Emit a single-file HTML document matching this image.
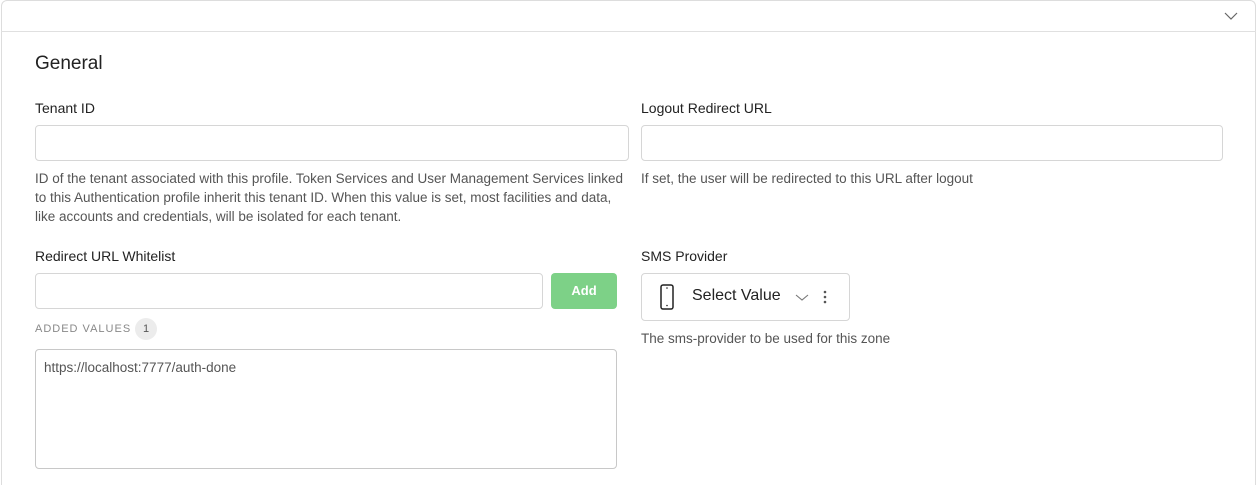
<!DOCTYPE html>
<html><head><style>
*{box-sizing:border-box;margin:0;padding:0}
html,body{width:1258px;height:485px;overflow:hidden}
body{background:#fff;font-family:"Liberation Sans",sans-serif;color:#222;position:relative}
.card{position:absolute;left:1px;top:0;width:1255px;height:485px;border:1px solid #ddd;border-bottom:none;border-radius:6px 6px 0 0}
.hdr{position:absolute;left:1px;top:31px;width:1255px;border-top:1px solid #e0e0e0}
.abs{position:absolute}
.lbl{font-size:14px;color:#222}
.inp{position:absolute;border:1px solid #d6d6d6;border-radius:4px;background:#fff}
.help{font-size:13.5px;color:#555;line-height:19px;white-space:nowrap}
</style></head><body>
<div class="card"></div>
<div class="hdr"></div>
<svg class="abs" style="left:1224px;top:11px" width="14" height="10" viewBox="0 0 14 10"><path d="M1 2l6 6 6-6" fill="none" stroke="#666" stroke-width="1.2"/></svg>
<div class="abs" style="left:35px;top:53px;font-size:19px;color:#222">General</div>
<div class="abs lbl" style="left:35px;top:100px">Tenant ID</div>
<div class="inp" style="left:35px;top:125px;width:594px;height:36px"></div>
<div class="abs help" style="left:35px;top:169px">ID of the tenant associated with this profile. Token Services and User Management Services linked<br>to this Authentication profile inherit this tenant ID. When this value is set, most facilities and data,<br>like accounts and credentials, will be isolated for each tenant.</div>
<div class="abs lbl" style="left:641px;top:100px">Logout Redirect URL</div>
<div class="inp" style="left:641px;top:125px;width:582px;height:36px"></div>
<div class="abs help" style="left:641px;top:169px">If set, the user will be redirected to this URL after logout</div>
<div class="abs lbl" style="left:35px;top:248px">Redirect URL Whitelist</div>
<div class="inp" style="left:35px;top:273px;width:508px;height:36px"></div>
<div class="abs" style="left:551px;top:273px;width:66px;height:36px;background:#7dd187;border-radius:4px;color:#fff;font-size:13px;font-weight:bold;text-align:center;line-height:36px">Add</div>
<div class="abs" style="left:35px;top:322px;font-size:11px;letter-spacing:1px;color:#888;line-height:14px">ADDED VALUES</div>
<div class="abs" style="left:135px;top:318px;width:22px;height:22px;border-radius:11px;background:#ececec;font-size:11px;color:#555;text-align:center;line-height:22px">1</div>
<div class="inp" style="left:35px;top:349px;width:582px;height:120px;border-color:#c8c8c8"></div>
<div class="abs" style="left:44px;top:360px;font-size:13.5px;color:#555">https://localhost:7777/auth-done</div>
<div class="abs lbl" style="left:641px;top:248px">SMS Provider</div>
<div class="inp" style="left:641px;top:273px;width:209px;height:48px"></div>
<svg class="abs" style="left:660px;top:284px" width="14" height="26" viewBox="0 0 14 26"><rect x="1" y="1" width="12" height="24" rx="2" fill="none" stroke="#222" stroke-width="1.5"/><circle cx="7" cy="4" r=".8" fill="#222"/><circle cx="7" cy="21.5" r=".8" fill="#222"/></svg>
<div class="abs" style="left:692px;top:287px;font-size:16px;color:#222">Select Value</div>
<svg class="abs" style="left:795px;top:293px" width="14" height="9" viewBox="0 0 14 9"><path d="M1 2l6 5 6-5" fill="none" stroke="#777" stroke-width="1.1"/></svg>
<svg class="abs" style="left:822px;top:290px" width="6" height="16" viewBox="0 0 6 16"><circle cx="3" cy="2" r="1.3" fill="#555"/><circle cx="3" cy="7" r="1.3" fill="#555"/><circle cx="3" cy="12" r="1.3" fill="#555"/></svg>
<div class="abs help" style="left:641px;top:329px">The sms-provider to be used for this zone</div>
</body></html>
